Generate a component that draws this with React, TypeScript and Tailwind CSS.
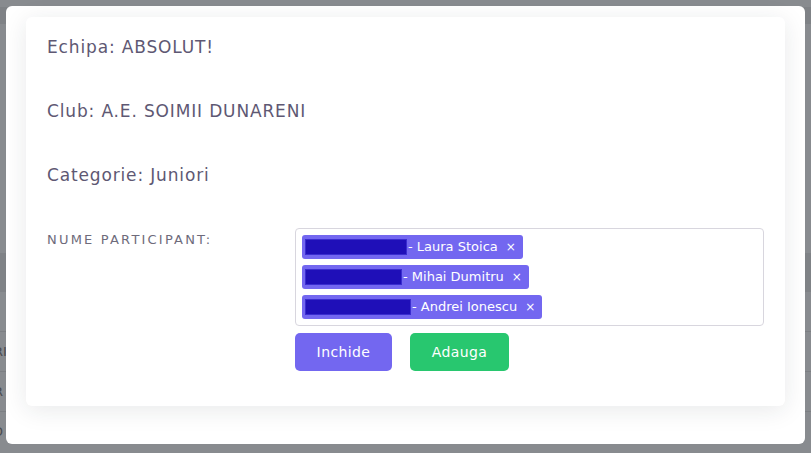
import React from 'react';

const participants = [
  { name: 'Laura Stoica', redact: 102 },
  { name: 'Mihai Dumitru', redact: 97 },
  { name: 'Andrei Ionescu', redact: 106 },
];

const font = { fontFamily: '"DejaVu Sans", "Open Sans", sans-serif' };

const App: React.FC = () => {
  return (
    <div className="relative w-[811px] h-[453px] overflow-hidden bg-[#888b8f]" style={font}>
      {/* Page behind the overlay */}
      <div className="flex flex-col text-[#4a4c50] text-[13px]">
        <div className="h-[7px]" />
        <div className="h-[17px] bg-[#7f8286]" />
        <div className="h-[229px]" />
        <div className="h-[39px] bg-[#7f8286]" />
        <div className="h-[40px] border-b border-[#7c7f83]" />
        <div className="h-[40px] border-b border-[#7c7f83] flex items-center">
          <span className="-ml-[6px]">RI</span>
        </div>
        <div className="h-[40px] border-b border-[#7c7f83] flex items-center">
          <span className="-ml-[6px]">R</span>
        </div>
        <div className="h-[40px] flex items-center">
          <span className="-ml-[7px]">D</span>
        </div>
      </div>

      {/* Modal */}
      <div className="absolute left-[6px] top-[6px] w-[799px] h-[438px] bg-white rounded-[6px] flex flex-col px-[20px] pt-[11px]">
        <div className="bg-white rounded-[6px] shadow-[0_4px_24px_0_rgba(34,41,47,0.1)] h-[389px] px-[21px] pt-[19px] text-[#5e5873]">
          <div className="text-[17px] leading-[22px] tracking-[0.85px]">Echipa: ABSOLUT!</div>
          <div className="text-[17px] leading-[22px] tracking-[0.85px] mt-[42px]">Club: A.E. SOIMII DUNARENI</div>
          <div className="text-[17px] leading-[22px] tracking-[0.85px] mt-[42px]">Categorie: Juniori</div>

          <div className="flex mt-[42px]">
            <div className="w-[250px] pt-[2px] text-[13px] uppercase text-[#6e6b7b] tracking-[2.2px]">
              Nume participant:
            </div>
            <div className="flex flex-col">
              <div className="w-[469px] h-[98px] border border-[#d8d6de] rounded-[4px] px-[6px] pt-[6px] flex flex-col items-start gap-[6px]">
                {participants.map((p) => (
                  <div
                    key={p.name}
                    className="h-[24px] bg-[#7367f0] rounded-[3px] flex items-center pl-[3px] pr-[7px] text-white text-[13px]"
                  >
                    <span className="h-[16px] bg-[#1f0fb8] border border-[#3a2dd0]" style={{ width: p.redact }} />
                    <span className="ml-[1px]">- {p.name}</span>
                    <span className="ml-[8px] text-[12px] leading-none">×</span>
                  </div>
                ))}
              </div>
              <div className="flex gap-[18px] mt-[7px]">
                <button className="w-[97px] h-[38px] rounded-[5px] bg-[#7367f0] text-white text-[14px] font-medium tracking-[0.4px]">
                  Inchide
                </button>
                <button className="w-[99px] h-[38px] rounded-[5px] bg-[#28c76f] text-white text-[14px] font-medium tracking-[0.4px]">
                  Adauga
                </button>
              </div>
            </div>
          </div>
        </div>
      </div>
    </div>
  );
};

export default App;
